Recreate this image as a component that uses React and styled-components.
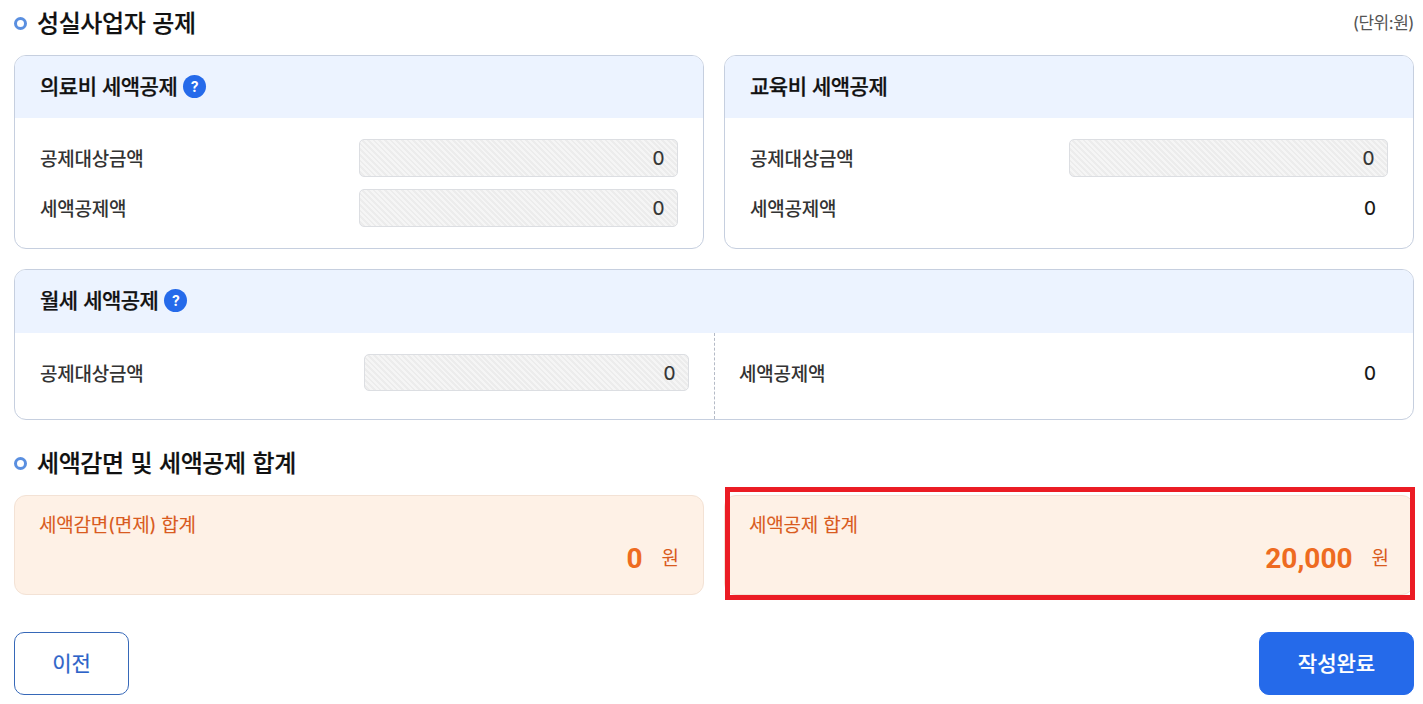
import React from 'react';
import styled, { createGlobalStyle } from 'styled-components';

const App = () => (
  <>
    <GlobalStyle />
    <Page>
      <SectionHead>
        <SectionTitle>성실사업자 공제</SectionTitle>
        <Unit>(단위:원)</Unit>
      </SectionHead>
      <Columns>
        <Card>
          <CardHead>
            의료비 세액공제 <Help />
          </CardHead>
          <CardBody>
            <Field label='공제대상금액' value='0' disabled />
            <Field label='세액공제액' value='0' disabled />
          </CardBody>
        </Card>
        <Card>
          <CardHead>교육비 세액공제</CardHead>
          <CardBody>
            <Field label='공제대상금액' value='0' disabled />
            <Field label='세액공제액' value='0' />
          </CardBody>
        </Card>
      </Columns>
      <WideCard>
        <CardHead $wide>
          월세 세액공제 <Help />
        </CardHead>
        <SplitBody>
          <SplitCell>
            <Field label='공제대상금액' value='0' disabled short />
          </SplitCell>
          <SplitCell $right>
            <Field label='세액공제액' value='0' short />
          </SplitCell>
        </SplitBody>
      </WideCard>
      <SectionHead $total>
        <SectionTitle>세액감면 및 세액공제 합계</SectionTitle>
      </SectionHead>
      <Columns>
        <Total label='세액감면(면제) 합계' value='0' />
        <Total label='세액공제 합계' value='20,000' marked />
      </Columns>
      <ButtonRow>
        <Button type='button'>이전</Button>
        <Button type='button' $primary>
          작성완료
        </Button>
      </ButtonRow>
    </Page>
  </>
);

const Help = () => <HelpBadge>?</HelpBadge>;

const Field = ({ label, value, disabled, short }) => (
  <Row $short={short}>
    <Label $short={short}>{label}</Label>
    {disabled ? (
      <Disabled $short={short}>{value}</Disabled>
    ) : (
      <Value $short={short}>{value}</Value>
    )}
  </Row>
);

const Total = ({ label, value, marked }) => (
  <TotalCard>
    <TotalLabel>{label}</TotalLabel>
    <TotalLine>
      <Amount>{value}</Amount>
      <Won>원</Won>
    </TotalLine>
    {marked && <Marker />}
  </TotalCard>
);

export default App;

const GlobalStyle = createGlobalStyle`
  *, *::before {
    box-sizing: border-box;
  }
  body {
    margin: 0;
    background: #fff;
    color: #111;
    font-family: Inter, 'Noto Sans CJK KR', sans-serif;
  }
`;

const Page = styled.main`
  display: flex;
  flex-direction: column;
  height: 704px;
  padding: 0 9px 0 14px;
  overflow: hidden;
`;

const SectionHead = styled.div`
  display: flex;
  align-items: center;
  justify-content: space-between;
  height: 46px;
  margin: ${props => (props.$total ? '20px 0 9px' : '0 0 9px')};
`;

const SectionTitle = styled.h2`
  display: flex;
  align-items: center;
  margin: 0;
  padding-top: 1px;
  font-size: 24px;
  font-weight: 500;
  line-height: 36px;
  letter-spacing: -0.4px;
  word-spacing: 0.8px;
  -webkit-text-stroke: 0.2px;
  &::before {
    content: '';
    width: 13px;
    height: 13px;
    margin: -1px 10px 0 0;
    border: 3px solid #5a8fe0;
    border-radius: 50%;
  }
`;

const Unit = styled.span`
  padding-bottom: 3px;
  color: #555;
  font-size: 17px;
  letter-spacing: -0.5px;
`;

const Columns = styled.div`
  display: grid;
  grid-template-columns: 1fr 1fr;
  gap: 20px;
`;

const Card = styled.section`
  height: 194px;
  border: 1px solid #c6cfdf;
  border-radius: 12px;
  overflow: hidden;
`;

const WideCard = styled(Card)`
  height: 151px;
  margin-top: 20px;
`;

const CardHead = styled.h3`
  display: flex;
  align-items: center;
  gap: 6px;
  height: ${props => (props.$wide ? 63 : 62)}px;
  margin: 0;
  padding: ${props => (props.$wide ? '0 0 5px 25px' : '0 0 4px 25px')};
  background: #ecf3ff;
  font-size: 21px;
  font-weight: 500;
  letter-spacing: -0.5px;
  word-spacing: 0.4px;
  -webkit-text-stroke: 0.25px;
`;

const HelpBadge = styled.span`
  display: flex;
  align-items: center;
  justify-content: center;
  width: 23px;
  height: 23px;
  margin-top: 2px;
  border-radius: 50%;
  background: #256aea;
  color: #fff;
  font-size: 14px;
  font-weight: 700;
  letter-spacing: 0;
  -webkit-text-stroke: 0;
`;

const CardBody = styled.div`
  display: flex;
  flex-direction: column;
  gap: 12px;
  padding: 21px 25px 0;
`;

const SplitBody = styled.div`
  display: grid;
  grid-template-columns: 1fr 1fr;
  height: 86px;
`;

const SplitCell = styled.div`
  padding: ${props => (props.$right ? '21px 25px 0 24px' : '21px 25px 0')};
  border-left: ${props => (props.$right ? '1px dashed #b4bac6' : '0')};
`;

const Row = styled.div`
  display: flex;
  align-items: center;
  justify-content: space-between;
  height: ${props => (props.$short ? 37 : 38)}px;
`;

const Label = styled.span`
  padding-bottom: ${props => (props.$short ? 1 : 2)}px;
  color: #333;
  font-size: 19px;
  font-weight: 500;
  letter-spacing: -0.25px;
`;

const Value = styled.span`
  padding: ${props => (props.$short ? '2px 12px 0 0' : '0 12px 0 0')};
  font-size: 19px;
  -webkit-text-stroke: 0.2px;
`;

const Disabled = styled.output`
  display: flex;
  align-items: center;
  justify-content: flex-end;
  width: ${props => (props.$short ? 325 : 319)}px;
  height: 100%;
  padding: ${props => (props.$short ? '2px 12.5px 0 0' : '0 12.5px 0 0')};
  border: 1px solid #dcdee2;
  border-radius: 5px;
  background: repeating-linear-gradient(45deg, #f5f5f5 0 2px, #ececec 2px 4px);
  color: #333;
  font-size: 19px;
  -webkit-text-stroke: 0.2px;
`;

const TotalCard = styled.section`
  position: relative;
  height: 100px;
  padding: 15px 24px 0;
  border: 1px solid #f3e2d5;
  border-radius: 12px;
  background: #fef1e6;
  color: #d95b20;
`;

const TotalLabel = styled.div`
  font-size: 19px;
  line-height: 30px;
  letter-spacing: -0.2px;
  -webkit-text-stroke: 0.1px;
`;

const TotalLine = styled.div`
  display: flex;
  align-items: center;
  justify-content: flex-end;
  gap: 19px;
  height: 34px;
`;

const Amount = styled.strong`
  color: #ee6b21;
  font-family: Roboto, sans-serif;
  font-size: 28px;
  font-weight: 700;
`;

const Won = styled.span`
  padding-bottom: 3px;
  font-size: 19px;
`;

const Marker = styled.span`
  position: absolute;
  top: -9px;
  right: -2px;
  bottom: -6px;
  left: 0;
  border: 5px solid #eb1c24;
`;

const ButtonRow = styled.div`
  display: flex;
  justify-content: space-between;
  margin-top: 37px;
`;

const Button = styled.button`
  width: ${props => (props.$primary ? 155 : 115)}px;
  height: 63px;
  padding: 0 0 3px;
  border: 1px solid ${props => (props.$primary ? '#256aea' : '#3668b8')};
  border-radius: 10px;
  background: ${props => (props.$primary ? '#256aea' : '#fff')};
  color: ${props => (props.$primary ? '#fff' : '#2d63c8')};
  font-family: inherit;
  font-size: 21px;
  font-weight: ${props => (props.$primary ? 500 : 400)};
  -webkit-text-stroke: 0.2px;
`;
